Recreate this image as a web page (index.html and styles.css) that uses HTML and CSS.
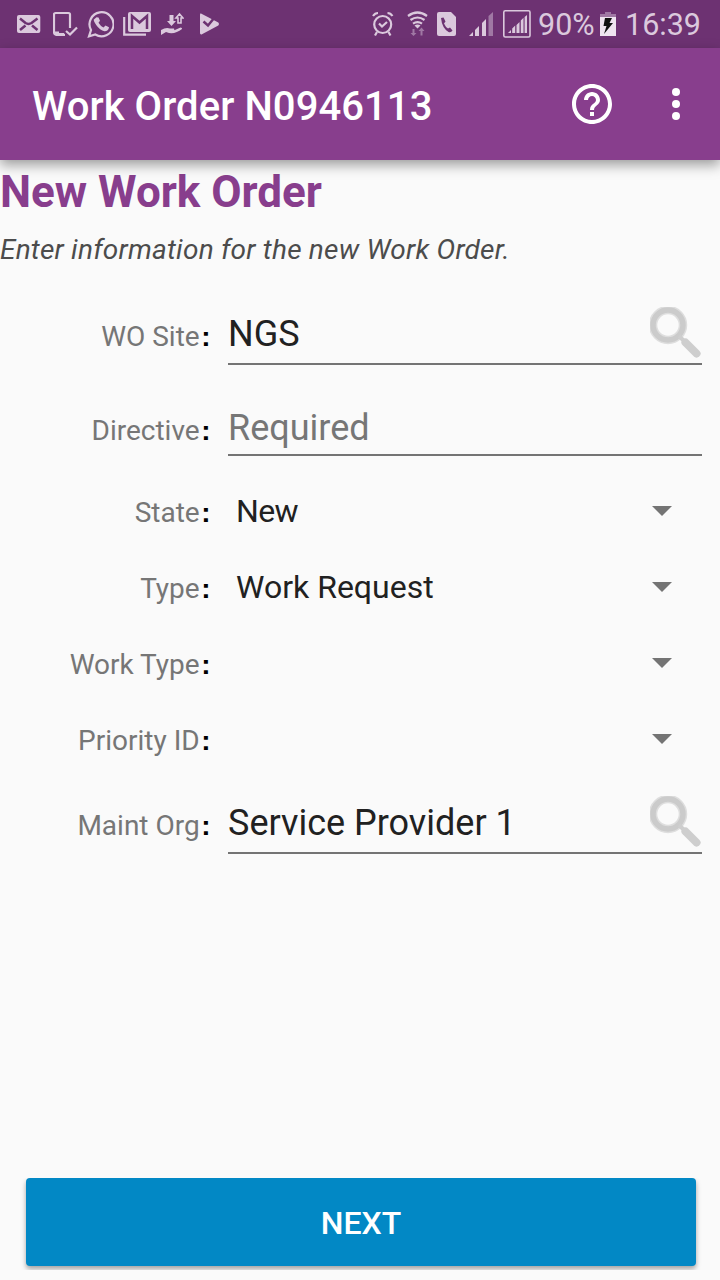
FILE: index.html
```html
<!DOCTYPE html>
<html lang="en">
<head>
<meta charset="utf-8">
<title>Work Order N0946113</title>
<link rel="stylesheet" href="styles.css">
</head>
<body>
<header class="status-bar">
  <div class="notifications">
    <svg class="icon mail" width="24" height="48" viewBox="0 0 24 48"><rect x="0" y="15" width="23.300" height="18" rx="2"/><path class="cut" d="M3 18.500l5.500 4.500q3 1.800 6 0L20.500 18.500M3 30l5.500-4.500M20.500 30 15 25.500"/></svg>
    <svg class="icon device" width="25" height="48" viewBox="0 0 25 48"><path class="line" d="M12 34.800H3.500Q1 34.800 1 32V14.500Q1 13 2.500 13H15.500Q17 13 17 14.500V28M13 31l4 3.500 7-7"/><path d="M1 31.500h5v1.500h5v3H3z"/></svg>
    <svg class="icon chat" width="27" height="48" viewBox="0 0 27 48"><path class="line" d="M2 36.300 4 30A12 12 0 1 1 8.300 34.500z"/><path d="M9.500 17.300l2 .1 1.500 3.400-1.500 2q2 3.500 5 4.600l2-2 3.500 1.800q-.5 4-4.500 4Q13 30.500 9.200 25T7.500 19z"/></svg>
    <svg class="icon gmail" width="28" height="48" viewBox="0 0 28 48"><path class="line" d="M1.200 17v17.700H23"/><rect x="5" y="12" width="23" height="20" rx="2"/><path class="cut" d="M9 29V16l7.500 6.500L24 16v13"/></svg>
    <svg class="icon transfer" width="23" height="48" viewBox="0 0 23 48"><path d="M8.500 15h4v6H15l-4.500 5L6 21h2.500z"/><path class="line thin" d="M17 23v-5h-2l3.500-4 3.500 4h-2v5z"/><path d="M0 30q5-3 9-1.500h4q1 1-.5 2h-3q5 0 10-3 2 0 1.500 1.500-6 5-13 4l-3-1L0 35z"/></svg>
    <svg class="icon play" width="21" height="48" viewBox="0 0 21 48"><path d="M2 13.500 19.300 22.500q1.500 1.500 0 3L3 34.300Q1 35 1 33V14.500Q1 13 2 13.500z"/><path class="cut" d="M4.500 21.500l4.500 4L18 14.500"/></svg>
  </div>
  <div class="system">
    <svg class="icon alarm" width="22" height="48" viewBox="0 0 22 48"><circle class="line" cx="10.700" cy="24.500" r="8.500"/><path class="line" d="M1 16q2-3 5-3M15.500 13q3 0 5 3M5 32l-2 3.500M16.500 32l2 3.500M7 23.500l3 3 5-4.500"/></svg>
    <svg class="icon wifi" width="21" height="48" viewBox="0 0 21 48"><path class="line" d="M1 16q9.500-7 19 0M3.500 20q7-5 14 0M6 23.700q4.500-3 9 0"/><path d="M7.500 25.500q3-2 6 0l-3 3z"/><path class="dim" d="M5.500 29h2v4h2l-3 3-3-3h2zM13.500 35.500h2V31h2l-3-3.500-3 3.500h2z"/></svg>
    <svg class="icon sim" width="19" height="48" viewBox="0 0 19 48"><path d="M2 12h12l5 5v17q0 2-2 2H2q-2 0-2-2V14q0-2 2-2z"/><path class="fill-cut" d="M4 18l2.500-.5 2 4-1.500 2q1.500 3.500 4 5l2-1 2.500 3q-1.500 2.500-4 1.500Q5 28 4 18z"/></svg>
    <svg class="icon signal" width="24" height="48" viewBox="0 0 24 48"><path d="M0 36l4-4v4zM6 30l4-4v10H6zM13 23l4-4v17h-4z"/><path class="dim" d="M19.500 16l4.500-4v24h-4.500z"/></svg>
    <svg class="icon boxed" width="28" height="48" viewBox="0 0 28 48"><rect class="line thin" x=".8" y="10.800" width="26.200" height="26.200" rx="1.500"/><path d="M5 33l3-3v3zM9.200 28.500l3-3V33h-3zM13.500 25l3-3v11h-3zM17.800 20.500l2.700-2.700V33h-2.700zM21.600 17l2.400-2v18h-2.400z"/></svg>
    <span class="percent">90%</span>
    <svg class="icon battery" width="16" height="48" viewBox="0 0 16 48"><path class="dim" d="M0 14h5v-2h6v2h5v3H0z"/><path class="charge" d="M0 17h16v19H0z"/><path class="bolt" d="M5 18h7l-2.500 5H13L4 34l2.500-8H3.500z"/></svg>
    <span class="clock">16:39</span>
  </div>
</header>
<div class="app-bar">
  <h1 class="title">Work Order N0946113</h1>
  <svg class="help" width="40" height="40" viewBox="2 2 20 20"><path d="M11 18h2v-2h-2v2zm1-16C6.480 2 2 6.480 2 12s4.480 10 10 10 10-4.480 10-10S17.520 2 12 2zm0 18c-4.410 0-8-3.590-8-8s3.590-8 8-8 8 3.590 8 8-3.590 8-8 8zm0-14c-2.210 0-4 1.790-4 4h2c0-1.100.9-2 2-2s2 .9 2 2c0 2-3 1.750-3 5h2c0-2.250 3-2.500 3-5 0-2.210-1.790-4-4-4z"/></svg>
  <svg class="more" width="8" height="32" viewBox="0 0 8 32"><circle cx="4" cy="4" r="4"/><circle cx="4" cy="16" r="4"/><circle cx="4" cy="28" r="4"/></svg>
</div>
<main class="content">
  <h2 class="heading">New Work Order</h2>
  <p class="hint">Enter information for the new Work Order.</p>
  <div class="form">
    <div class="row site"><div class="label">WO Site<b>:</b></div><div class="input"><span>NGS</span>
      <svg class="search" width="52" height="52" viewBox="0 0 52 52"><circle class="halo" cx="18" cy="18" r="15"/><circle class="ring" cx="18" cy="18" r="15"/><path class="neck" d="M29 29l5 5"/><path class="handle" d="M35.500 35.500l11 11"/></svg></div></div>
    <div class="row directive"><div class="label">Directive<b>:</b></div><div class="input placeholder"><span>Required</span></div></div>
    <div class="row spinner"><div class="label">State<b>:</b></div><div class="select"><span class="short">New</span><i class="arrow"></i></div></div>
    <div class="row spinner"><div class="label">Type<b>:</b></div><div class="select"><span>Work Request</span><i class="arrow"></i></div></div>
    <div class="row spinner"><div class="label">Work Type<b>:</b></div><div class="select"><span></span><i class="arrow"></i></div></div>
    <div class="row spinner"><div class="label">Priority ID<b>:</b></div><div class="select"><span></span><i class="arrow"></i></div></div>
    <div class="row org"><div class="label">Maint Org<b>:</b></div><div class="input"><span>Service Provider 1</span>
      <svg class="search" width="52" height="52" viewBox="0 0 52 52"><circle class="halo" cx="18" cy="18" r="15"/><circle class="ring" cx="18" cy="18" r="15"/><path class="neck" d="M29 29l5 5"/><path class="handle" d="M35.500 35.500l11 11"/></svg></div></div>
  </div>
  <div class="footer"><button class="next">NEXT</button></div>
</main>
</body>
</html>
```
FILE: styles.css
```css
* { box-sizing: border-box; }
body {
  margin: 0;
  width: 720px;
  height: 1280px;
  overflow: hidden;
  display: flex;
  flex-direction: column;
  background: #fafafa;
  font-family: Roboto, sans-serif;
}
svg { display: block; flex: none; }

.status-bar {
  display: flex;
  justify-content: space-between;
  height: 48px;
  padding: 0 20px 0 17px;
  background: #6d3272;
  color: #dbc9dd;
  font-size: 30.5px;
  line-height: 50px;
}
.notifications, .system { display: flex; height: 48px; }
.device { margin-left: 12px; }
.chat { margin-left: 9px; }
.gmail { margin-left: 9px; }
.transfer { margin-left: 10px; }
.play { margin-left: 15px; }
.wifi { margin-left: 13px; }
.sim { margin-left: 9px; }
.signal { margin-left: 13px; }
.boxed { margin-left: 10px; }
.percent { width: 56px; margin-left: 7px; white-space: nowrap; }
.battery { margin-left: 6px; }
.clock { width: 75px; margin-left: 9px; white-space: nowrap; }
.icon { fill: #dbc9dd; }
.icon .line { fill: none; stroke: #dbc9dd; stroke-width: 2.2; }
.icon .thin { stroke-width: 1.6; }
.icon .cut { fill: none; stroke: #6d3272; stroke-width: 2.5; }
.icon .fill-cut { fill: #6d3272; }
.icon .dim { fill: #a078a4; }
.icon .charge { fill: #efe4f0; }
.icon .bolt { fill: #111; }

.app-bar {
  position: relative;
  display: flex;
  align-items: center;
  height: 112px;
  padding: 0 40px 0 32px;
  background: #883e8d;
  box-shadow: 0 5px 12px rgba(0, 0, 0, .38);
  color: #fff;
}
.title { flex: 1; margin: 6px 0 0; font-size: 40px; font-weight: 500; line-height: 48px; letter-spacing: .07px; }
.help, .more { fill: #fff; }
.more { margin-left: 60px; }

.content { flex: 1; display: flex; flex-direction: column; }
.heading { margin: 6px 0 0; color: #883e8d; font-size: 44px; font-weight: 700; line-height: 52px; }
.hint { margin: 16px 0 0; color: #4c4c4c; font-size: 28px; font-style: italic; line-height: 32px; letter-spacing: .22px; }

.form { margin-top: 30px; }
.row { display: grid; grid-template-columns: 210px 474px; column-gap: 18px; align-items: start; }
.site { height: 88px; }
.directive { height: 90px; }
.spinner { height: 76px; }
.org { height: 94px; }
.label { padding-top: 25px; color: #767676; font-size: 28px; line-height: 32px; text-align: right; }
.label b { margin: 0 -.5px 0 1.5px; color: #000; font-family: "Liberation Sans", sans-serif; line-height: 20px; }
.input {
  position: relative;
  height: 69px;
  padding-top: 17px;
  border-bottom: 2px solid #747474;
  color: #212121;
  font-size: 36px;
  line-height: 42px;
}
.directive .label { padding-top: 31px; }
.directive .input { height: 72px; padding-top: 23px; }
.placeholder { color: #767676; }
.org .label { padding-top: 32px; }
.org .input { height: 76px; padding-top: 24px; }
.search { position: absolute; right: 0; bottom: 4px; fill: none; }
.search .halo { stroke: #dedede; stroke-width: 8.5; }
.search .ring { stroke: #cbcbcb; stroke-width: 5.5; }
.search .neck { stroke: #cecece; stroke-width: 4; }
.search .handle { stroke: #cecece; stroke-width: 8; stroke-linecap: round; }
.spinner .label { padding-top: 23px; }
.select {
  display: flex;
  justify-content: space-between;
  align-items: flex-start;
  padding: 18px 30px 0 8px;
  color: #212121;
  font-size: 32px;
  line-height: 38px;
}
.short { letter-spacing: -.6px; }
.arrow { margin-top: 14px; width: 20px; height: 10px; background: #747474; clip-path: polygon(0 0, 100% 0, 50% 100%); }

.footer { height: 92px; margin: auto 12px 10px; padding: 0 12px 4px 14px; overflow: hidden; }
.next {
  display: block;
  width: 100%;
  height: 88px;
  padding: 2px 0 0;
  border: 0;
  border-radius: 4px;
  background: #0288c5;
  box-shadow: 0 3px 5px rgba(0, 0, 0, .35);
  color: #fff;
  font: 500 32px/38px Roboto, sans-serif;
}
```
